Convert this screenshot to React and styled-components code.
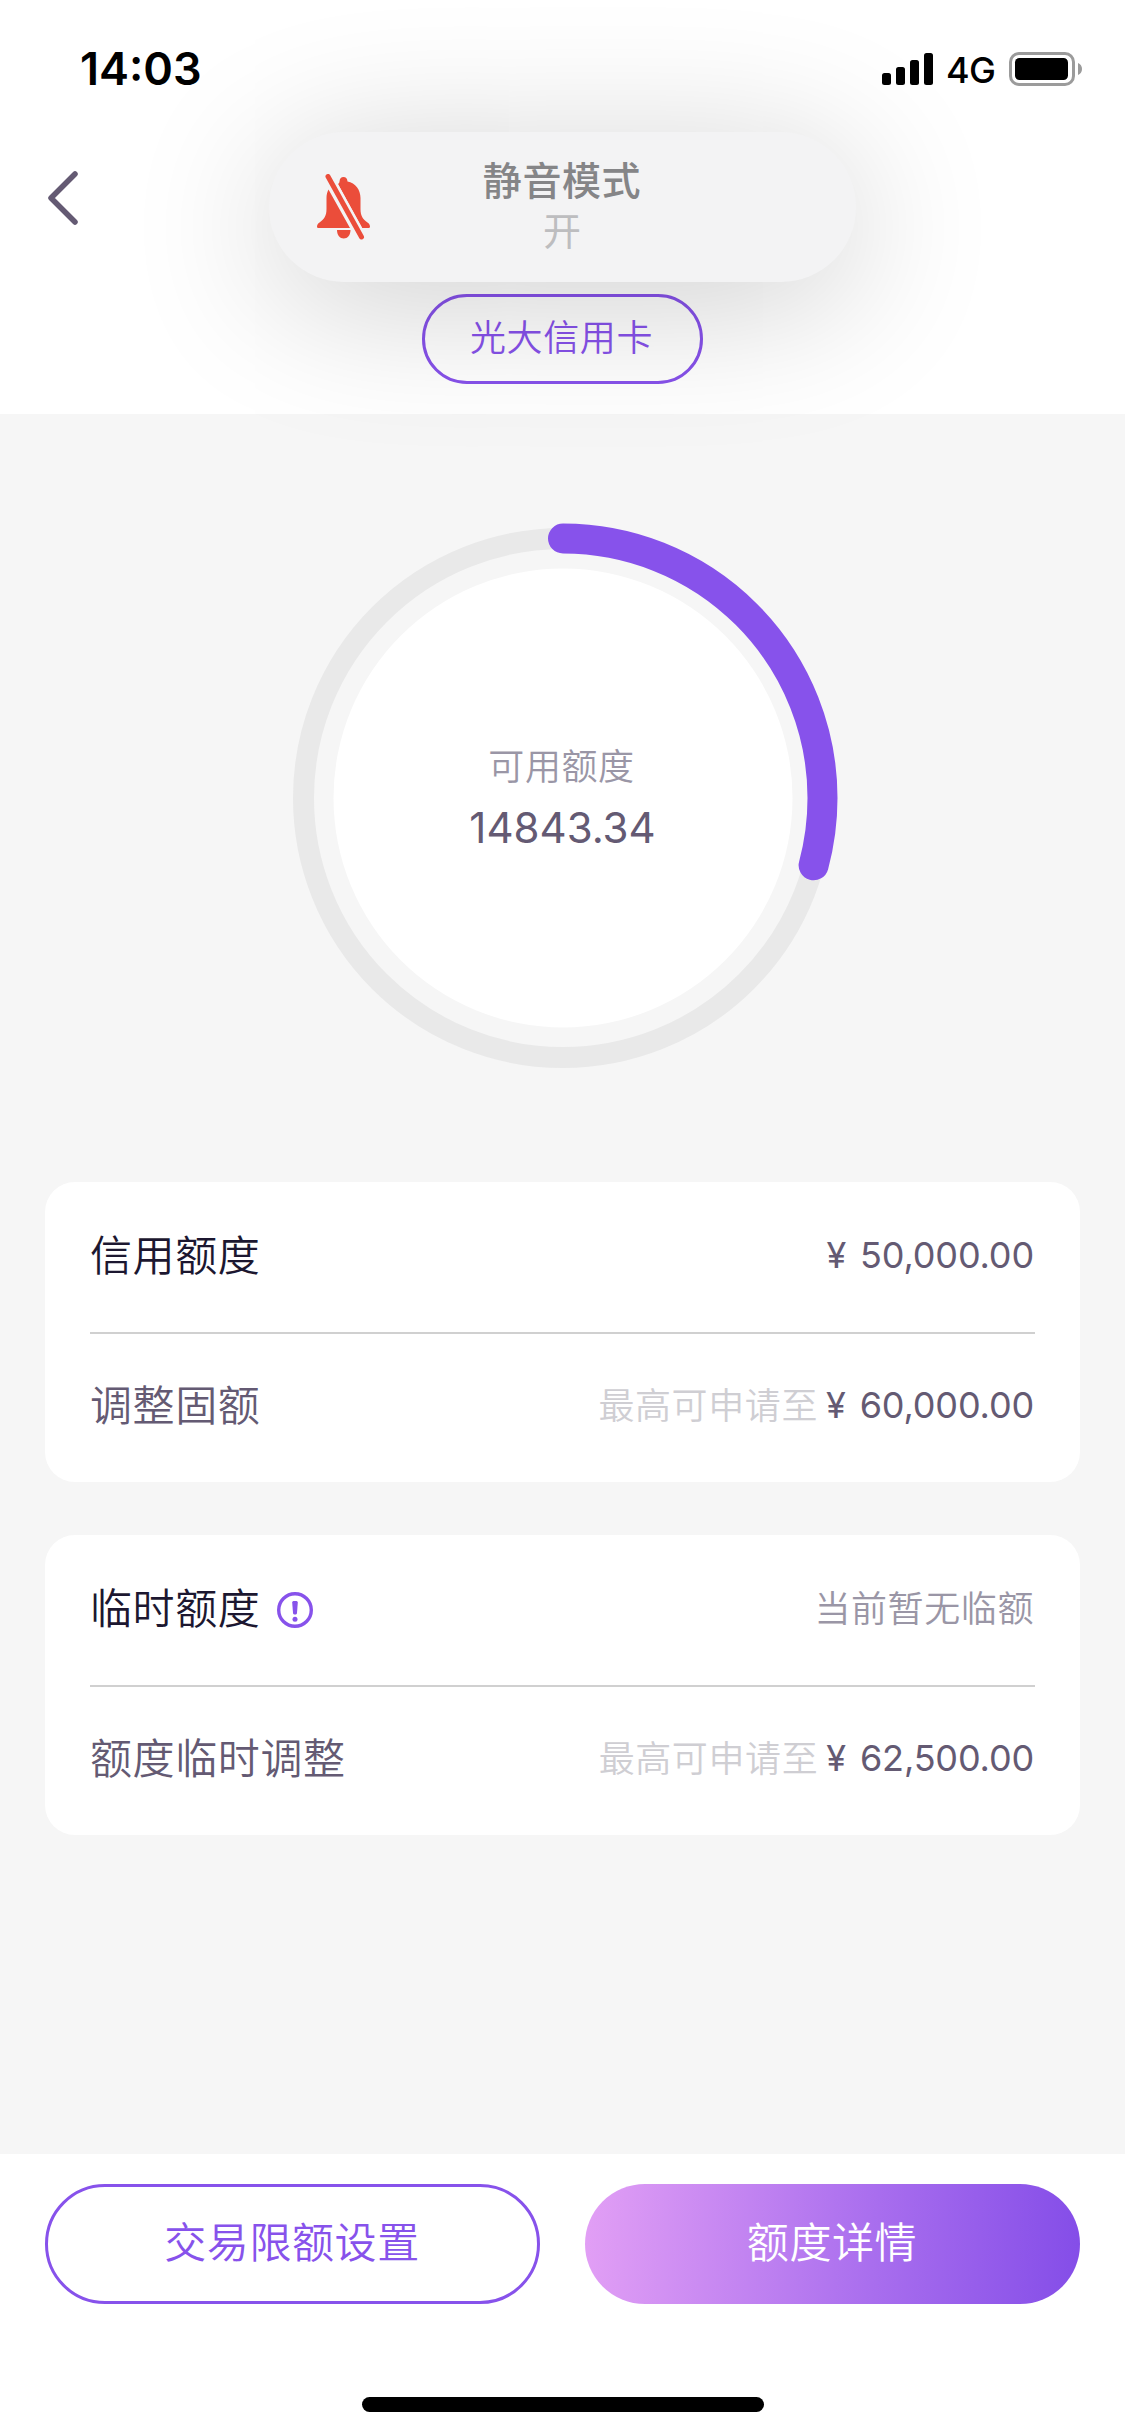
import React from "react";
import styled, { createGlobalStyle } from "styled-components";

const GlobalStyle = createGlobalStyle`
  * {
    box-sizing: border-box;
  }
  body {
    margin: 0;
    background: #f6f6f6;
    font-family: Inter, "Noto Sans CJK SC", sans-serif;
  }
  button {
    font-family: inherit;
  }
`

const RADIUS = 259.5;
const LENGTH = 2 * Math.PI * RADIUS;

const groups = [
  [
    { label: '信用额度', dark: true, amount: '50,000.00' },
    { label: '调整固额', hint: '最高可申请至', amount: '60,000.00' },
  ],
  [
    { label: '临时额度', dark: true, info: true, note: '当前暂无临额' },
    { label: '额度临时调整', hint: '最高可申请至', amount: '62,500.00' },
  ],
];

const StatusBar = () => (
  <StatusContainer>
    <Clock>14:03</Clock>
    <StatusIcons>
      <svg width="51" height="32" viewBox="0 0 51 32">
        <rect x="0" y="20" width="9" height="12" rx="2.5" />
        <rect x="14" y="14" width="9" height="18" rx="2.5" />
        <rect x="28" y="7" width="9" height="25" rx="2.5" />
        <rect x="42" y="0" width="9" height="32" rx="2.5" />
      </svg>
      <Network>4G</Network>
      <svg width="73" height="34" viewBox="0 0 73 34">
        <rect x="1.5" y="1.5" width="63" height="31" rx="8.5" fill="none" stroke="#9b9b9b" strokeWidth="3" />
        <rect x="6" y="6" width="53" height="22" rx="4.5" />
        <path d="M69 11c2.500 .8 4 3.200 4 6s-1.500 5.200-4 6z" fill="#9b9b9b" />
      </svg>
    </StatusIcons>
  </StatusContainer>
);

const MuteBanner = () => (
  <Banner>
    <BellIcon viewBox="0 0 53 66">
      <path d="M21 10c.8-.7 1.300-1 1.500-2.600C22.700 4.500 24.300 3 26.500 3s3.800 1.500 4 4.400C38.500 9 43.500 15.500 43.500 24v11c0 7 2.500 10.500 7 13.500 1.500 1 2.500 2.500 2.500 4 0 1-.7 1.500-1.700 1.500H45z" />
      <path d="M11.500 15.500L33 54H1.700C.7 54 0 53.500 0 52.500c0-1.500 1-3 2.500-4 4.500-3 7-6.500 7-13.500V24c0-3.200.7-6 2-8.500z" />
      <path d="M20 56h13.500c0 5-3 8.500-6.800 8.500S20 61 20 56z" />
      <path d="M11 2.500L44.500 63" stroke="#f3f3f4" strokeWidth="10" fill="none" />
      <path d="M11 2.500L44.500 63" stroke="#eb4d3a" strokeWidth="5" strokeLinecap="round" fill="none" />
    </BellIcon>
    <BannerTitle>静音模式</BannerTitle>
    <BannerState>开</BannerState>
  </Banner>
);

const LimitRing = () => (
  <RingSection>
    <Ring>
      <svg width="550" height="550" viewBox="-275 -275 550 550">
        <circle r="229.500" fill="#fff" />
        <circle r={RADIUS} fill="none" stroke="#e9e9e9" strokeWidth="21" />
        <circle
          r={RADIUS}
          fill="none"
          stroke="#8752eb"
          strokeWidth="30"
          strokeLinecap="round"
          strokeDasharray={`${LENGTH * 105 / 360} ${LENGTH}`}
          transform="rotate(-90)"
        />
      </svg>
      <RingText>
        <RingLabel>可用额度</RingLabel>
        <RingValue>14843.34</RingValue>
      </RingText>
    </Ring>
  </RingSection>
);

const InfoIcon = () => (
  <svg width="36" height="36" viewBox="0 0 36 36">
    <circle cx="18" cy="18" r="16.300" fill="none" stroke="#8752eb" strokeWidth="3.400" />
    <path d="M15.200 10.500c0-1 .8-1.500 1.800-1.500h2c1 0 1.800.5 1.800 1.500L20 21c-.1 1-1 1.500-2 1.500s-1.900-.5-2-1.500z" fill="#8752eb" />
    <circle cx="18" cy="27.300" r="2.500" fill="#8752eb" />
  </svg>
);

export default function App() {
  return (
    <Page>
      <GlobalStyle />
      <Header>
        <StatusBar />
        <NavBar>
          <BackButton aria-label="返回">
            <svg width="30" height="54" viewBox="0 0 30 54" fill="none" stroke="#645a73" strokeWidth="5.500" strokeLinecap="round" strokeLinejoin="round">
              <path d="M27 3L3 27l24 24" />
            </svg>
          </BackButton>
        </NavBar>
        <CardTab>光大信用卡</CardTab>
        <MuteBanner />
      </Header>
      <LimitRing />
      <Groups>
        {groups.map((rows, i) => (
          <Group key={i}>
            {rows.map((row) => (
              <Row key={row.label}>
                <RowLabel $dark={row.dark}>
                  <LabelText>{row.label}</LabelText>
                  {row.info && <InfoIcon />}
                </RowLabel>
                <RowValue>
                  {row.hint && <Hint>{row.hint}</Hint>}
                  {row.note && <Note>{row.note}</Note>}
                  {row.amount && <Amount><Yen>¥</Yen>{row.amount}</Amount>}
                </RowValue>
              </Row>
            ))}
          </Group>
        ))}
      </Groups>
      <Footer>
        <Actions>
          <Action>交易限额设置</Action>
          <Action $primary>额度详情</Action>
        </Actions>
        <HomeIndicator />
      </Footer>
    </Page>
  );
}

const Page = styled.div`
  display: flex;
  flex-direction: column;
  width: 1125px;
  height: 2436px;
  overflow: hidden;
`

const Header = styled.header`
  position: relative;
  display: flex;
  flex-direction: column;
  align-items: center;
  height: 414px;
  background: #fff;
`

const StatusContainer = styled.div`
  display: flex;
  justify-content: space-between;
  align-items: flex-start;
  width: 100%;
  height: 132px;
  padding: 52px 43px 0 80px;
`

const Clock = styled.span`
  font-size: 45px;
  font-weight: 600;
  line-height: 34px;
  color: #000;
`

const StatusIcons = styled.div`
  display: flex;
  align-items: center;
  height: 34px;
`

const Network = styled.span`
  margin: 2px 14px 0 13px;
  font-size: 36px;
  font-weight: 450;
  line-height: 34px;
  letter-spacing: -0.8px;
`

const NavBar = styled.nav`
  display: flex;
  align-items: center;
  width: 100%;
  height: 132px;
  padding-left: 48px;
`

const BackButton = styled.button`
  display: flex;
  padding: 0;
  border: none;
  background: none;
`

const CardTab = styled.button`
  width: 281px;
  height: 90px;
  margin-top: 30px;
  padding: 0 2px 8px 0;
  border: 3px solid #8752eb;
  border-radius: 45px;
  background: transparent;
  font-size: 36px;
  font-weight: 350;
  letter-spacing: 0.6px;
  color: #8752eb;
`

const Banner = styled.div`
  position: absolute;
  top: 132px;
  left: 269px;
  display: flex;
  flex-direction: column;
  align-items: center;
  width: 587px;
  height: 150px;
  padding: 24px 1px 0 0;
  border-radius: 75px;
  background: #f3f3f4;
  box-shadow: 0 20px 150px rgba(0, 0, 0, 0.2);
`

const BellIcon = styled.svg`
  position: absolute;
  top: 42px;
  left: 48px;
  width: 53px;
  height: 66px;
  fill: #eb4d3a;
`

const BannerTitle = styled.span`
  font-size: 39px;
  font-weight: 500;
  line-height: 50px;
  letter-spacing: 0.6px;
  color: #858587;
`

const BannerState = styled.span`
  font-size: 38px;
  line-height: 50px;
  color: #bdbdbf;
`

const RingSection = styled.section`
  display: flex;
  justify-content: center;
  padding-top: 109px;
  height: 768px;
`

const Ring = styled.div`
  display: grid;
  width: 550px;
  height: 550px;
  > * {
    grid-area: 1 / 1;
  }
`

const RingText = styled.div`
  display: flex;
  flex-direction: column;
  align-items: center;
  justify-content: center;
  padding-top: 6px;
`

const RingLabel = styled.span`
  margin: -1px 2px 1px 0;
  font-size: 36px;
  font-weight: 350;
  line-height: 54px;
  letter-spacing: 0.6px;
  color: #9a96a6;
`

const RingValue = styled.span`
  font-size: 42px;
  line-height: 66px;
  color: #645a73;
`

const Groups = styled.main`
  display: flex;
  flex-direction: column;
  gap: 53px;
  padding: 0 45px;
`

const Group = styled.section`
  height: 300px;
  padding: 0 45px;
  border-radius: 30px;
  background: #fff;
`

const Row = styled.div`
  display: flex;
  justify-content: space-between;
  align-items: center;
  height: 150px;
  & + & {
    border-top: 2px solid #d0d0d0;
    padding-bottom: 2px;
  }
`

const RowLabel = styled.div`
  display: flex;
  align-items: center;
  gap: 17px;
  font-size: 42px;
  font-weight: 350;
  letter-spacing: 0.6px;
  color: ${({ $dark }) => ($dark ? '#1c1730' : '#645a73')};
`

const LabelText = styled.span`
  padding-bottom: 10px;
`

const RowValue = styled.div`
  display: flex;
  align-items: center;
  gap: 8px;
  padding-right: 1px;
  font-size: 36px;
`

const Hint = styled.span`
  padding-bottom: 8px;
  font-weight: 350;
  letter-spacing: 0.6px;
  color: #cfced3;
`

const Note = styled.span`
  padding-bottom: 8px;
  font-weight: 350;
  letter-spacing: 0.6px;
  color: #9a96a6;
`

const Amount = styled.span`
  padding-bottom: 4px;
  letter-spacing: -0.15px;
  color: #645a73;
`

const Yen = styled.span`
  margin-right: 14px;
`

const Footer = styled.footer`
  display: flex;
  flex-direction: column;
  align-items: center;
  justify-content: space-between;
  height: 282px;
  margin-top: auto;
  padding: 30px 45px 24px;
  background: #fff;
`

const Actions = styled.div`
  display: flex;
  justify-content: space-between;
  width: 100%;
`

const Action = styled.button`
  width: 495px;
  height: 120px;
  padding: 0 1px 9px 0;
  border: ${({ $primary }) => ($primary ? 'none' : '3px solid #8752eb')};
  border-radius: 60px;
  background: ${({ $primary }) => ($primary ? 'linear-gradient(92deg, #e29ff5, #a96eee 58%, #844de8)' : '#fff')};
  font-size: 42px;
  font-weight: 350;
  letter-spacing: 0.6px;
  color: ${({ $primary }) => ($primary ? '#fff' : '#8752eb')};
`

const HomeIndicator = styled.div`
  width: 402px;
  height: 15px;
  border-radius: 8px;
  background: #000;
`
